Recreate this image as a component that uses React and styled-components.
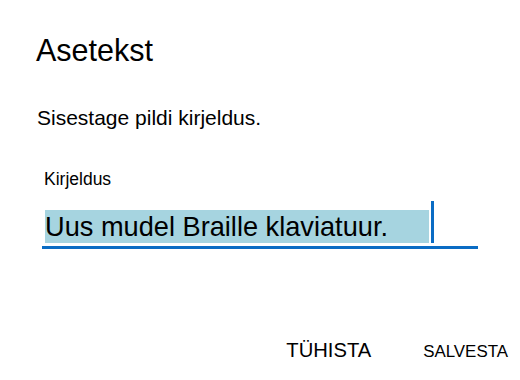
import React from 'react'
import styled, { createGlobalStyle } from 'styled-components'

const GlobalStyle = createGlobalStyle`
  html, body {
    margin: 0;
    padding: 0;
    background: #ffffff;
  }
  body {
    font-family: "Liberation Sans", Arial, sans-serif;
    color: #000000;
  }
`

const Dialog = styled.div`
  width: 520px;
  height: 380px;
  box-sizing: border-box;
  padding: 32px 0 0 36px;
  display: flex;
  flex-direction: column;
`

const Title = styled.h1`
  margin: 0;
  font-size: 30.5px;
  font-weight: 400;
  line-height: 36px;
`

const Prompt = styled.p`
  margin: 37px 0 0 1px;
  font-size: 21px;
  line-height: 26px;
`

const Field = styled.div`
  margin: 38px 0 0 6px;
  width: 436px;
  display: flex;
  flex-direction: column;
`

const Label = styled.label`
  font-size: 17.5px;
  line-height: 20px;
  padding-left: 2px;
`

const InputRow = styled.div`
  margin-top: 12px;
  display: flex;
  align-items: flex-end;
  padding-left: 3px;
  border-bottom: 3px solid #0a6cc4;
  padding-bottom: 3px;
`

const Selected = styled.span`
  display: inline-block;
  font-size: 27.2px;
  line-height: 33px;
  background: #a6d4e0;
  width: 384px;
`

const Caret = styled.span`
  display: inline-block;
  width: 3px;
  height: 42px;
  margin-left: 2px;
  background: #0a6cc4;
`

const Actions = styled.div`
  margin-top: auto;
  margin-bottom: 18px;
  display: flex;
  justify-content: flex-end;
  align-items: baseline;
  padding-right: 12px;
`

const ActionButton = styled.button`
  border: 0;
  background: transparent;
  padding: 0;
  font-family: "Liberation Sans", Arial, sans-serif;
  font-size: ${p => p.size}px;
  color: #000000;
  margin-left: ${p => p.gap || 0}px;
`

export default function App() {
  return (
    <>
      <GlobalStyle />
      <Dialog>
        <Title>Asetekst</Title>
        <Prompt>Sisestage pildi kirjeldus.</Prompt>
        <Field>
          <Label>Kirjeldus</Label>
          <InputRow>
            <Selected>Uus mudel Braille klaviatuur.</Selected>
            <Caret />
          </InputRow>
        </Field>
        <Actions>
          <ActionButton size={20.2}>TÜHISTA</ActionButton>
          <ActionButton size={16.9} gap={52}>SALVESTA</ActionButton>
        </Actions>
      </Dialog>
    </>
  )
}
